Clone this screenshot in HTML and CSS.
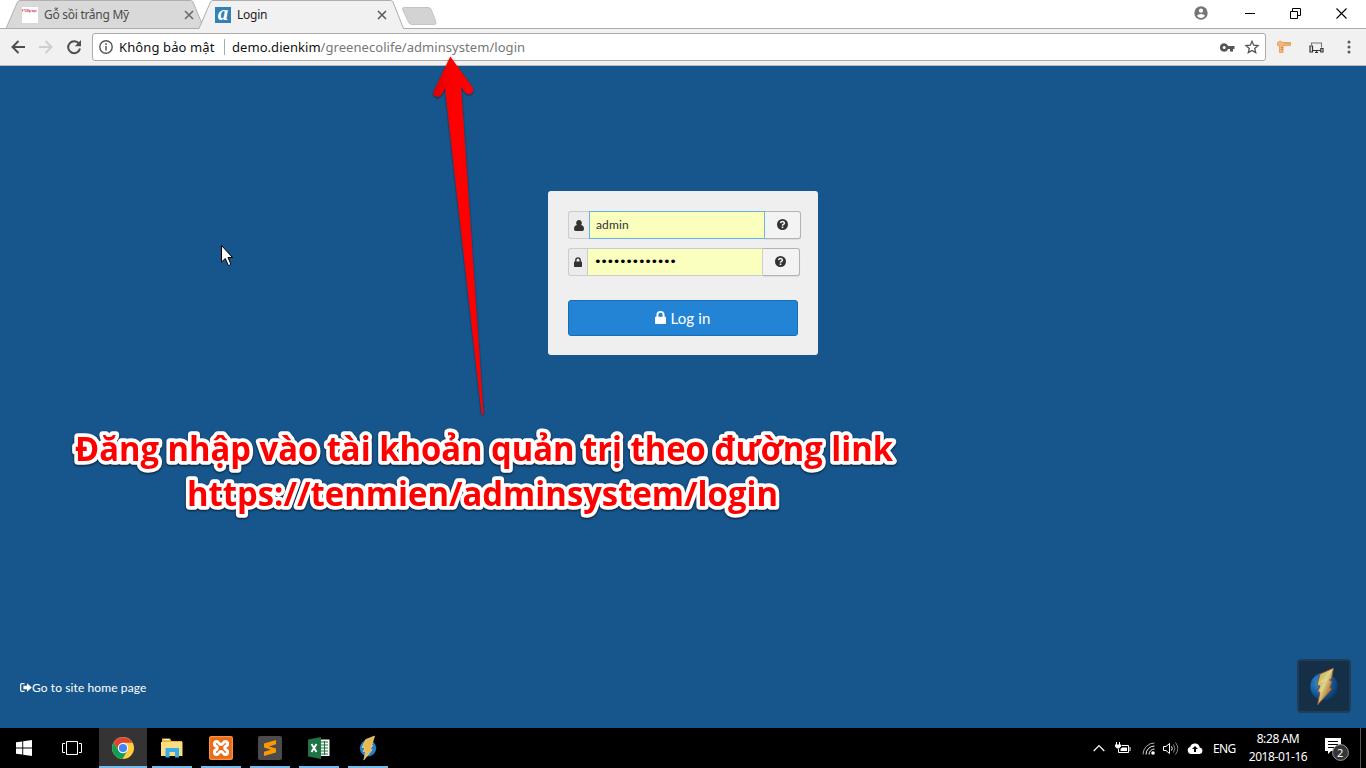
FILE: index.html
```html
<!DOCTYPE html>
<html lang="vi">
<head>
<meta charset="utf-8">
<title>Login</title>
<link rel="stylesheet" href="styles.css">
</head>
<body>
<div class="screen">
  <header class="tabstrip">
    <svg class="tab-shapes" width="440" height="29" viewBox="0 0 440 29">
      <path d="M0 28.5H6L17.500 2Q18.500 .5 20 .5H190Q192 .5 193 2L204 28.500Z" fill="#d9d9d9" stroke="#b0b0b0"/>
      <path d="M0 28.500H199L210.500 2Q211.500 .5 213 .5H390Q392 .5 393 2L403.500 28.500H440V29H0Z" fill="#f1f1f1"/>
      <path d="M0 28.500H199L210.500 2Q211.500 .5 213 .5H390Q392 .5 393 2L403.500 28.500H440" fill="none" stroke="#adadad"/>
      <path d="M404 7.500H428Q430 7.500 431 9L436 22Q436.500 24.500 434 24.500H412Q410 24.500 409 23L402.500 9.500Q402 7.500 404 7.500Z" fill="#d3d3d3" stroke="#c4c4c4"/>
    </svg>
    <div class="tab tab-back">
      <span class="favicon-red">f Tiếp tục</span>
      <span class="tab-title">Gỗ sồi trắng Mỹ</span>
      <svg width="10" height="10" viewBox="0 0 10 10"><path d="M1 1l8 8M9 1l-8 8" stroke="#6a6a6a" stroke-width="1.600"/></svg>
    </div>
    <div class="tab tab-front">
      <span class="favicon-a">a</span>
      <span class="tab-title">Login</span>
      <svg width="10" height="10" viewBox="0 0 10 10"><path d="M1 1l8 8M9 1l-8 8" stroke="#5a5a5a" stroke-width="1.600"/></svg>
    </div>
    <div class="window-buttons">
      <svg class="profile" width="14" height="14" viewBox="0 0 14 14"><circle cx="7" cy="7" r="6.700" fill="#757575"/><circle cx="7" cy="4.700" r="2.100" fill="#fff"/><path d="M3 9.800Q4 7.900 7 7.900T11 9.800Q9.600 12 7 12T3 9.800Z" fill="#fff"/></svg>
      <svg class="minimize" width="10" height="12" viewBox="0 0 10 12"><path d="M0 6.500H10" stroke="#000"/></svg>
      <svg class="restore" width="11" height="11" viewBox="0 0 11 11"><path d="M.5 3.500H7.500V10.500H.5ZM2.500 3V.5H10.500V7.500H8" fill="none" stroke="#000"/></svg>
      <svg width="11" height="11" viewBox="0 0 11 11"><path d="M.5 .5l10 10M10.500 .5l-10 10" stroke="#000" stroke-width="1.100"/></svg>
    </div>
  </header>

  <div class="toolbar">
    <svg class="back" width="14" height="14" viewBox="0 0 14 14"><path d="M14 7H1.500M7.500 1L1.500 7l6 6" fill="none" stroke="#4f4f4f" stroke-width="2"/></svg>
    <svg class="forward" width="14" height="14" viewBox="0 0 14 14"><path d="M0 7H12.500M6.500 1l6 6l-6 6" fill="none" stroke="#cfcfcf" stroke-width="2"/></svg>
    <svg class="reload" width="14" height="14" viewBox="0 0 14 14"><path d="M12 3.600A6 6 0 1 0 13 8.600" fill="none" stroke="#4f4f4f" stroke-width="2"/><path d="M14 0V6.200H7.800Z" fill="#4f4f4f"/></svg>
    <div class="omnibox">
      <svg width="14" height="14" viewBox="0 0 14 14"><circle cx="7" cy="7" r="6.200" fill="none" stroke="#555" stroke-width="1.400"/><path d="M7 6V10.600M7 3.300V4.900" stroke="#555" stroke-width="1.500"/></svg>
      <span class="security">Không bảo mật</span>
      <span class="divider"></span>
      <span class="url"><b>demo.dienkim</b>/greenecolife/adminsystem/login</span>
      <svg class="key" width="15" height="9" viewBox="0 0 15 9"><path fill-rule="evenodd" d="M4.200 .3A4.200 4.200 0 0 1 8.100 3H14.500V6H13V8.500H10V6H8.100A4.200 4.200 0 1 1 4.200 .3ZM4.200 3A1.500 1.500 0 1 0 4.200 6A1.500 1.500 0 0 0 4.200 3Z" fill="#555"/></svg>
      <svg class="star" width="14" height="14" viewBox="0 0 14 14"><path d="M7 1.300L8.700 5.200L13 5.600L9.700 8.400L10.700 12.600L7 10.400L3.300 12.600L4.300 8.400L1 5.600L5.300 5.200Z" fill="none" stroke="#555" stroke-width="1.300"/></svg>
    </div>
    <svg class="ruler" width="14" height="14" viewBox="0 0 14 14"><path d="M.5 2.500L3 1L6 2.500H13.500V5.500H6V12.500H2.500V5.500H.5Z" fill="#f5b878" stroke="#dd9a55" stroke-width=".8"/><path d="M8 3V4M10 3V4M12 3V4M4 7.500H6M4 9.500H6" stroke="#bd7229" stroke-width=".7"/></svg>
    <svg class="devices" width="15" height="13" viewBox="0 0 15 13"><path d="M2.500 4V2H12.500V6.500" fill="none" stroke="#777" stroke-width="1.100"/><path d="M3.500 9.500H11.500M1 5H3.500V11H1ZM11.800 7.500H14V11H11.800ZM6 11.500h3M7.500 9.500v2" fill="none" stroke="#333" stroke-width="1.200"/></svg>
    <svg class="menu" width="4" height="14" viewBox="0 0 4 14"><g fill="#5a5a5a"><circle cx="2" cy="2" r="1.500"/><circle cx="2" cy="7" r="1.500"/><circle cx="2" cy="12" r="1.500"/></g></svg>
  </div>

  <main class="page">
    <form class="card">
      <div class="row">
        <span class="addon user"><svg width="10" height="11" viewBox="0 0 10 11"><path d="M5 0A2.700 2.900 0 0 1 7.100 4.900Q10 5.400 10 9.200Q10 11 8.300 11H1.700Q0 11 0 9.200Q0 5.400 2.900 4.900A2.700 2.900 0 0 1 5 0Z" fill="#333"/></svg></span>
        <span class="field focused">admin</span>
        <span class="help"><svg width="11" height="11" viewBox="0 0 12 12"><circle cx="6" cy="6" r="6" fill="#333"/><path d="M3.900 4.500Q4.200 2.800 6 2.800T8.100 4.500Q8.100 5.300 6.900 5.900Q6 6.300 6 7.400" fill="none" stroke="#f3f3f3" stroke-width="1.700"/><path d="M5.100 8.200h1.800v1.700H5.100z" fill="#f3f3f3"/></svg></span>
      </div>
      <div class="row">
        <span class="addon lock"><svg width="8" height="10" viewBox="0 0 8 10"><path d="M1.800 5V3.200a2.200 2.300 0 0 1 4.400 0V5" fill="none" stroke="#333" stroke-width="1.400"/><rect y="4.500" width="8" height="5.500" rx=".7" fill="#333"/></svg></span>
        <span class="field password">•••••••••••••</span>
        <span class="help"><svg width="11" height="11" viewBox="0 0 12 12"><circle cx="6" cy="6" r="6" fill="#333"/><path d="M3.900 4.500Q4.200 2.800 6 2.800T8.100 4.500Q8.100 5.300 6.900 5.900Q6 6.300 6 7.400" fill="none" stroke="#f3f3f3" stroke-width="1.700"/><path d="M5.100 8.200h1.800v1.700H5.100z" fill="#f3f3f3"/></svg></span>
      </div>
      <div class="login"><svg width="11" height="13" viewBox="0 0 11 13"><path d="M2.400 6V4a3.100 3.100 0 0 1 6.200 0V6" fill="none" stroke="#fff" stroke-width="1.900"/><rect y="5.800" width="11" height="7.200" rx=".8" fill="#fff"/></svg><span>Log in</span></div>
    </form>
    <div class="home"><svg width="12" height="9" viewBox="0 0 12 9"><path d="M4.500 .6H1.800Q.7 .6 .7 1.700V7.300Q.7 8.400 1.800 8.400H4.500" fill="none" stroke="#fff" stroke-width="1.200"/><path d="M3.400 2.800H7V.3L11.800 4.500L7 8.700V6.200H3.400Z" fill="#fff"/></svg><span>Go to site home page</span></div>
    <div class="badge">
      <svg width="28" height="40" viewBox="0 0 28 40">
        <defs><radialGradient id="ball" cx=".35" cy=".35" r=".7"><stop offset="0" stop-color="#3d92d6"/><stop offset=".5" stop-color="#1765aa"/><stop offset="1" stop-color="#0b3868"/></radialGradient>
        <linearGradient id="bolt" x1="0" y1="0" x2="1" y2="1"><stop offset="0" stop-color="#c3b04c"/><stop offset=".45" stop-color="#d8cf83"/><stop offset=".65" stop-color="#b98748"/><stop offset="1" stop-color="#a99052"/></linearGradient></defs>
        <circle cx="14" cy="20.500" r="13.700" fill="url(#ball)"/>
        <path d="M23.500 2L21.500 13L19.500 14L22 15.500L20 22L22 23L7.500 39L10 26H7.500L10 20L7 19L10 8Z" fill="url(#bolt)" stroke="#8e4931" stroke-width=".9"/>
        <path d="M23 3L11 16L17 13L10 27" fill="none" stroke="#eee4a2" stroke-width=".8" opacity=".7"/>
      </svg>
    </div>
  </main>

  <footer class="taskbar">
    <div class="task start"><svg width="16" height="16" viewBox="0 0 16 16"><path d="M0 2.300L6.300 1.400V7.600H0ZM7.200 1.200L16 0V7.600H7.200ZM0 8.400H6.300V14.600L0 13.700ZM7.200 8.400H16V16L7.200 14.800Z" fill="#fff"/></svg></div>
    <div class="task"><svg width="20" height="14" viewBox="0 0 20 14"><path d="M4.500 .5H15.500V13.500H4.500ZM3 2.500H.5V11.500H3M17 2.500H19.500V11.500H17" fill="none" stroke="#fff"/></svg></div>
    <div class="task open current"><svg width="22" height="22" viewBox="0 0 22 22"><circle cx="11" cy="11" r="11" fill="#ffcd40"/><path d="M11 5.800H20.500A11 11 0 0 0 1.500 5.500L6.500 13.600Z" fill="#db4437"/><path d="M1.500 5.500A11 11 0 0 0 10.500 22L15.500 13.600L11 16.200L6.500 13.600Z" fill="#0f9d58"/><circle cx="11" cy="11" r="5.200" fill="#fff"/><circle cx="11" cy="11" r="4.100" fill="#4285f4"/></svg></div>
    <div class="task open"><svg width="22" height="20" viewBox="0 0 22 20"><path d="M1 .5H9L10.500 3H21V18H1Z" fill="#e7b83a"/><path d="M0 4H21.500V18H0Z" fill="#fbdc83"/><path d="M3 1.500H8" stroke="#fff"/><path d="M4.500 10H18V19.500H14V14H8.500V19.500H4.500Z" fill="#35aee8"/></svg></div>
    <div class="task open"><svg width="24" height="24" viewBox="0 0 24 24"><rect width="24" height="24" rx="2" fill="#e96b16"/><rect x=".7" y=".7" width="22.600" height="22.600" rx="2" fill="none" stroke="#fa9b55"/><path d="M7.500 10.300C4.500 9.500 4.800 5.500 7.700 5.500C10 5.500 9.700 8.500 12 8.500S14 5.500 16.300 5.500C19.200 5.500 19.500 9.500 16.500 10.300Q15 12 16.500 13.500C19.500 14.500 19.200 18.500 16.300 18.500C14 18.500 14.300 15.500 12 15.500S10 18.500 7.700 18.500C4.800 18.500 4.500 14.500 7.500 13.500Q9 12 7.500 10.300Z" fill="none" stroke="#fff" stroke-width="3"/></svg></div>
    <div class="task open"><svg width="24" height="24" viewBox="0 0 24 24"><rect width="24" height="24" rx="2" fill="#4b4b4b"/><path d="M6 7.500L18 4V8.300L11 10.400L18 12.500V16.500L6 20V15.800L13 13.700L6 11.500Z" fill="#ff9800"/></svg></div>
    <div class="task open"><svg width="22" height="22" viewBox="0 0 22 22"><path d="M12 2.500H21.500V19H12Z" fill="#f5f8f5"/><path d="M13 5H20M13 8H20M13 11H20M13 14H20M13 17H20M16.500 4V18" stroke="#207245" stroke-width="1"/><path d="M0 2.500L13 0V22L0 19.500Z" fill="#207245"/><path d="M3.500 7L8.500 15M8.500 7L3.500 15" stroke="#fff" stroke-width="1.900"/></svg></div>
    <div class="task open"><svg width="18" height="24" viewBox="0 0 28 40"><circle cx="14" cy="20.500" r="13.700" fill="#287fc6"/><path d="M25 0L21 13L19 14L22 15.500L18 22L21 23L7 40L10 26H6L9 19H4L10 6Z" fill="#e8b951" stroke="#f4e2a7"/></svg></div>
    <div class="tray">
      <svg class="t1" width="12" height="8" viewBox="0 0 12 8"><path d="M.7 7L6 1.500L11.300 7" fill="none" stroke="#fff" stroke-width="1.200"/></svg>
      <svg class="t2" width="16" height="13" viewBox="0 0 16 13"><path d="M6.500 3.500H13.500V10.500H3.500V7M15 5V9M1.500 0V3M4.500 0V3" fill="none" stroke="#fff"/><path d="M0 2.500H6V4.500L4 6.500H2L0 4.500ZM7 5.500H12V9H5.500V7Z" fill="#fff"/></svg>
      <svg class="t3" width="13" height="13" viewBox="0 0 13 13"><g fill="none" stroke="#fff"><path d="M1 12.500A11.500 11.500 0 0 1 12.500 1" stroke="#aaa"/><path d="M4 12.500A8.500 8.500 0 0 1 12.500 4"/><path d="M7 12.500A5.500 5.500 0 0 1 12.500 7"/></g><circle cx="11" cy="11" r="1.800" fill="#fff"/></svg>
      <svg class="t4" width="16" height="13" viewBox="0 0 16 13"><path d="M.5 4.500H3L6.500 1.500V11.500L3 8.500H.5Z" fill="none" stroke="#fff"/><path d="M8.500 4.500Q10 6.500 8.500 8.500" fill="none" stroke="#fff"/><path d="M10.500 2.500Q13 6.500 10.500 10.500M12.500 .5Q17 6.500 12.500 12.500" fill="none" stroke="#888"/></svg>
      <svg class="t5" width="16" height="11" viewBox="0 0 16 11"><path d="M4 11A3.800 3.800 0 0 1 3.200 3.700A5 5 0 0 1 12.700 4.500A3.300 3.300 0 0 1 12.700 11Z" fill="#fff"/><path d="M8 3L11 6H9V9H7V6H5Z" fill="#000"/></svg>
      <span class="lang">ENG</span>
      <div class="clock"><span>8:28 AM</span><span>2018-01-16</span></div>
      <div class="notice"><svg width="24" height="23" viewBox="0 0 24 23"><path d="M0 0H16V13H6L3 16V13H0Z" fill="#fff"/><path d="M3 3.500H13M3 6.500H13M3 9.500H10" stroke="#000"/><circle cx="15.500" cy="14.500" r="7.900" fill="#353535" stroke="#999"/></svg><span>2</span></div>
      <i class="peek"></i>
    </div>
  </footer>

  <svg class="arrow" width="60" height="375" viewBox="0 0 60 375">
    <defs><filter id="shade" x="-20%" y="-5%" width="140%" height="110%"><feDropShadow dx="0" dy="1" stdDeviation=".8" flood-color="#000" flood-opacity=".6"/></filter>
    <linearGradient id="red"><stop offset="0" stop-color="#e00000"/><stop offset=".4" stop-color="#f00"/></linearGradient></defs>
    <path d="M20.300 6.500L42.500 37.500Q44.500 42 40.500 44Q37.500 45 35 42L31 36.500L53.500 364.500H51.700L15 38L11.500 44.500Q9 48 5.500 46.500Q2 44.500 4 41Z" fill="url(#red)" filter="url(#shade)"/>
  </svg>
  <svg class="caption" width="840" height="110" viewBox="0 0 840 110">
    <text x="11" y="41" textLength="818" lengthAdjust="spacingAndGlyphs">Đăng nhập vào tài khoản quản trị theo đường link</text>
    <text x="123" y="86" textLength="591" lengthAdjust="spacingAndGlyphs">https://tenmien/adminsystem/login</text>
  </svg>
  <svg class="cursor" width="12" height="22" viewBox="0 0 12 22"><path d="M.5 .5V17L4.300 13.500L7.200 20.300Q9 21 9.800 19L7 12.500H11.500Z" fill="#fff" stroke="#000"/></svg>
</div>
</body>
</html>
```
FILE: styles.css
```css
* { box-sizing: border-box; }
body { margin: 0; overflow: hidden; font-family: "Noto Sans", "Open Sans", sans-serif; }
svg { display: block; flex: none; overflow: visible; }
span { white-space: nowrap; }
.screen { position: relative; width: 1366px; height: 768px; display: flex; flex-direction: column; overflow: hidden; }

.tabstrip { position: relative; height: 29px; flex: none; display: flex; background: #fff; border-bottom: 1px solid #adadad; }
.tab-shapes { position: absolute; left: 0; top: 0; }
.tab { position: relative; display: flex; align-items: center; height: 29px; }
.tab-back { width: 194px; padding-left: 22px; color: #4c4c4c; }
.tab-back .tab-title { letter-spacing: -.28px; }
.tab-front { width: 193px; padding-left: 21px; color: #222; }
.tab-front .tab-title { letter-spacing: -.25px; }
.tab-title { flex: 1; font-size: 12px; line-height: 16px; }
.favicon-red { width: 16px; height: 16px; margin-right: 6px; background: #fff; color: #e23b55; font-size: 3.5px; font-weight: 700; line-height: 7px; letter-spacing: -.15px; }
.favicon-a { width: 16px; height: 16px; margin-right: 6px; background: #3380b5; color: #fff; font: italic 700 21px/12px "Liberation Serif", serif; text-align: center; }
.window-buttons { margin-left: auto; display: flex; align-items: center; height: 26px; padding-right: 19px; }
.profile { margin-right: 37px; }
.minimize { margin-right: 35px; }
.restore { margin-right: 35px; }

.toolbar { height: 37px; flex: none; display: flex; align-items: center; background: #f1f1f1; border-bottom: 1px solid #b9b9b9; padding-left: 11px; }
.back { margin-right: 14px; }
.forward { margin-right: 14px; }
.reload { margin-right: 11px; }
.omnibox { width: 1174px; height: 28px; display: flex; align-items: center; padding: 0 6px; border: 1px solid #ababab; border-radius: 3px; background: #fff; font-size: 13px; color: #111; }
.security { width: 96px; margin-left: 6px; letter-spacing: .12px; }
.divider { width: 1px; height: 16px; margin: 0 7px 0 9px; background: #aaa; }
.url { flex: 1; color: #777; letter-spacing: .05px; }
.url b { font-weight: 400; color: #111; }
.key { margin-right: 10px; }
.ruler { margin-left: 11px; }
.devices { margin-left: 18px; }
.menu { margin-left: 23px; }

.page { flex: 1; display: flex; flex-direction: column; align-items: center; position: relative; padding-top: 125px; background: #17568c; font-family: Lato, sans-serif; }
.card { width: 270px; height: 164px; padding: 20px 20px 19px; border-radius: 3px; background: #efefef; display: flex; flex-direction: column; align-items: flex-start; }
.row { display: flex; flex: none; height: 28px; margin-bottom: 9px; }
.addon { display: flex; align-items: center; justify-content: center; border: 1px solid #ccc; border-right: 0; border-radius: 3px 0 0 3px; background: #ececec; }
.user { width: 21px; }
.lock { width: 19px; }
.field { width: 176px; padding-left: 6px; border: 1px solid #ccc; background: #faffbd; color: #333; font-size: 12px; line-height: 26px; letter-spacing: .15px; }
.focused { border-color: #66afe9; }
.password { color: #000; font: 13px/25px "DejaVu Sans", sans-serif; letter-spacing: -1.4px; }
.help { width: 36px; display: flex; align-items: center; justify-content: center; border: 1px solid #b3b3b3; border-left: 0; border-radius: 0 3px 3px 0; background: #f3f3f3; box-shadow: 0 1px 1px #ddd; padding-bottom: 1px; }
.password + .help { width: 37px; padding-right: 1px; }
.login { width: 230px; height: 36px; flex: none; margin-top: 15px; display: flex; align-items: center; justify-content: center; gap: 4px; border: 1px solid #1a6dae; border-radius: 3px; background: #2384d6; color: #fff; font-size: 15px; letter-spacing: .15px; }
.login svg { margin-bottom: 2px; }
.home { align-self: flex-start; margin: auto 0 33px 20px; height: 16px; display: flex; align-items: center; color: #fff; font-size: 12px; letter-spacing: .1px; }
.badge { position: absolute; right: 15px; bottom: 15px; width: 54px; height: 54px; display: flex; align-items: center; justify-content: center; border: 2px solid #1d3d58; border-radius: 4px; background: #152f47; }

.taskbar { height: 40px; flex: none; display: flex; background: #000; color: #fff; }
.task { width: 48px; height: 40px; display: flex; align-items: center; justify-content: center; position: relative; }
.open { margin-left: 1px; }
.open::after { content: ""; position: absolute; left: 4px; right: 4px; bottom: 0; height: 2px; background: #76b9ed; }
.current { margin-left: 3px; background: #343434; }
.current::after { left: 0; right: 0; }
.tray { margin-left: auto; display: flex; align-items: center; height: 40px; font-size: 12px; }
.t1 { margin-right: 10px; }
.t2 { margin-right: 11px; }
.t3 { margin-right: 8px; }
.t4 { margin-right: 8px; }
.t5 { margin-right: 10px; }
.lang { width: 24px; margin-right: 11px; letter-spacing: -.6px; }
.clock { width: 60px; display: flex; flex-direction: column; align-items: center; line-height: 18px; margin-right: 17px; letter-spacing: -.4px; }
.notice { position: relative; height: 26px; padding-top: 3px; }
.notice span { position: absolute; left: 12px; top: 10px; font-size: 11px; line-height: 15px; }
.peek { height: 40px; border-left: 1px solid #555; margin-left: 11px; width: 6px; }

.arrow { position: absolute; left: 430px; top: 50px; }
.caption { position: absolute; left: 64px; top: 420px; filter: drop-shadow(0 1px 1px rgba(0,0,0,.7)); }
.caption text { font: 700 34px "Open Sans", "Noto Sans", sans-serif; fill: #f00; stroke: #fff; stroke-width: 7.5px; stroke-linejoin: round; paint-order: stroke fill; }
.cursor { position: absolute; left: 221px; top: 245px; }
```
